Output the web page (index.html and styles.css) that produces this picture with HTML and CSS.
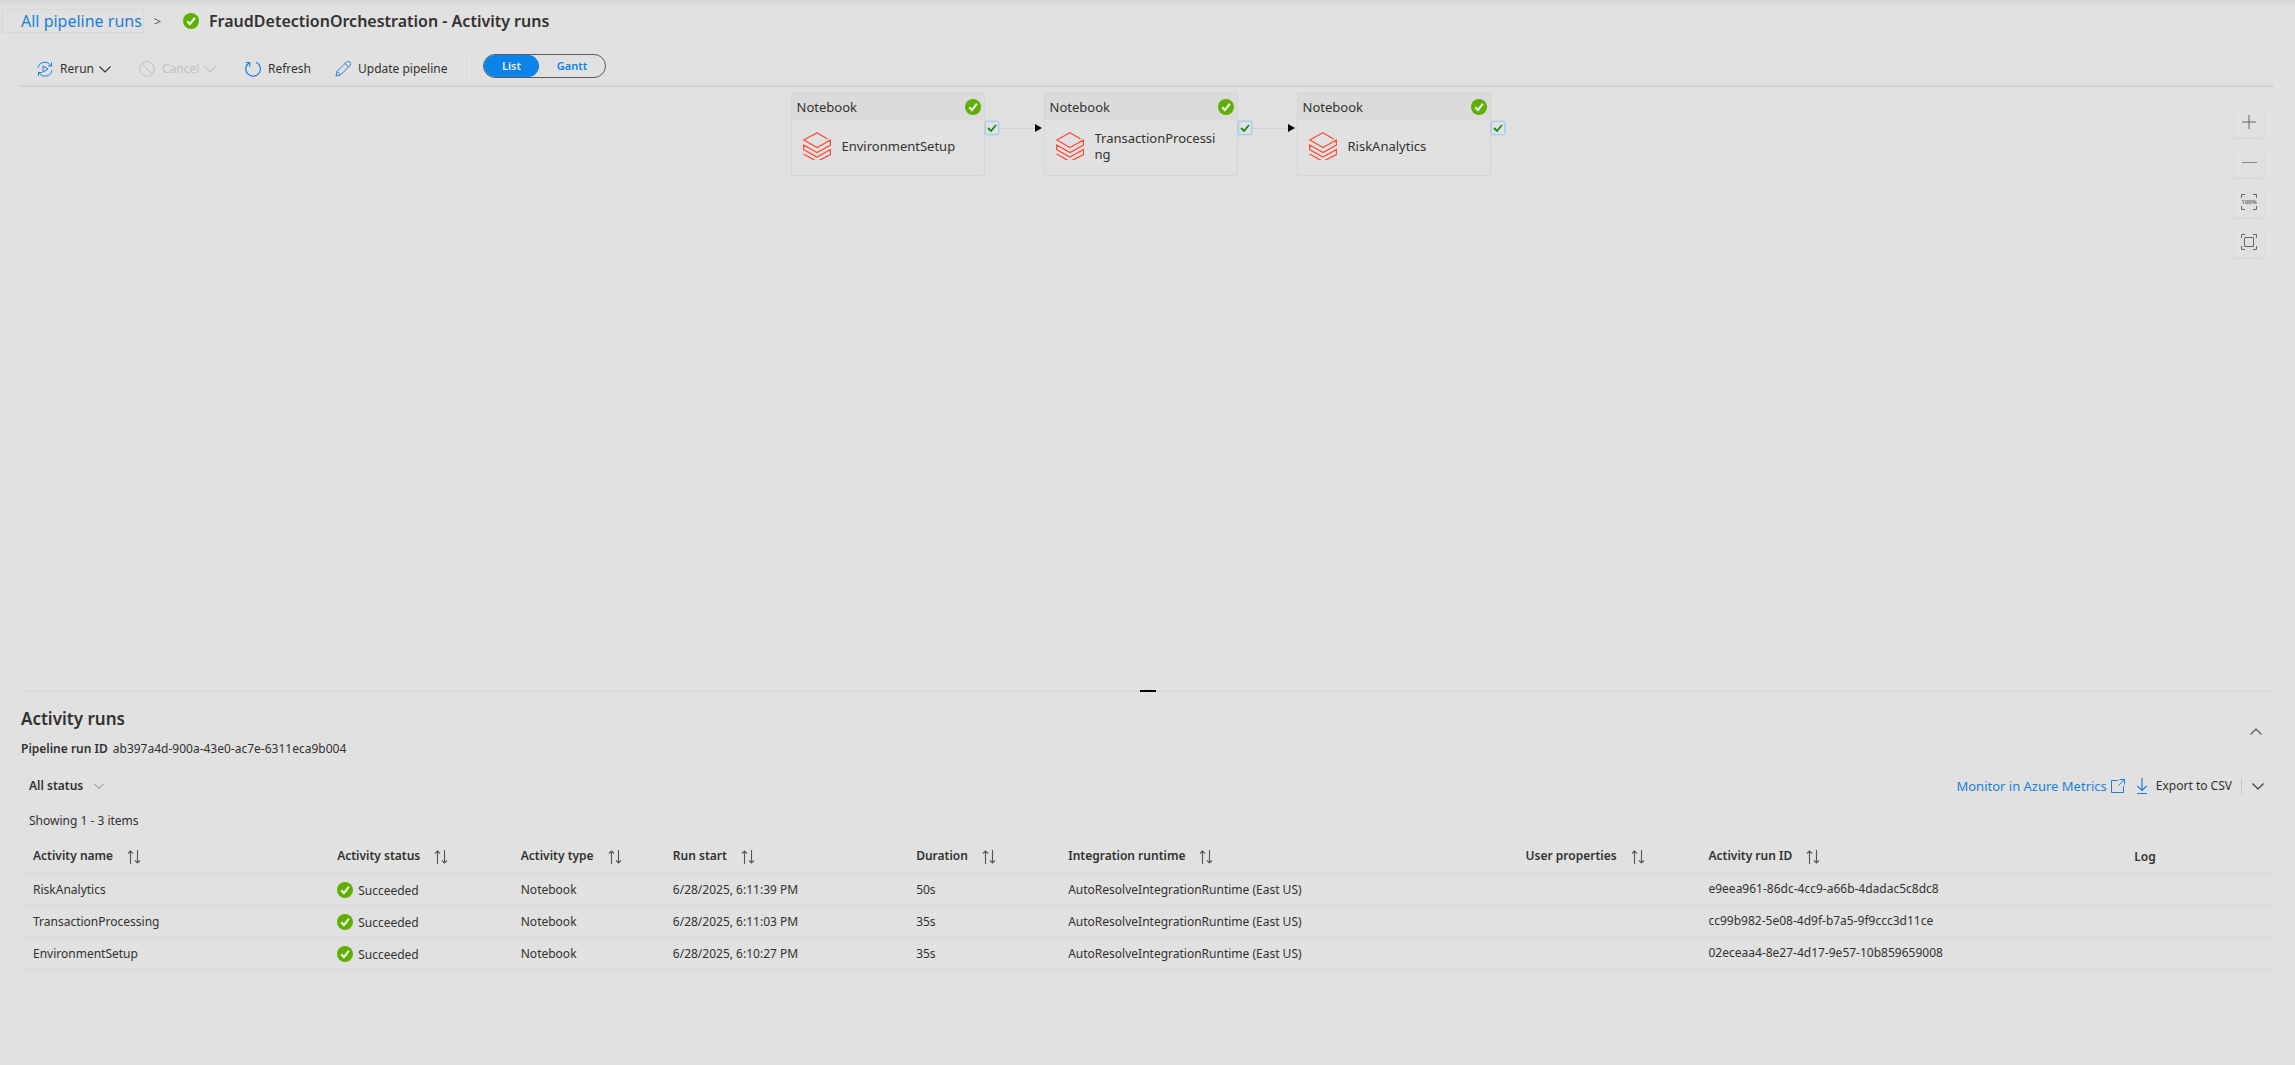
FILE: index.html
```html
<!DOCTYPE html>
<html lang="en">
<head>
<meta charset="utf-8">
<title>FraudDetectionOrchestration - Activity runs</title>
<link rel="stylesheet" href="styles.css">
</head>
<body>
<svg class="defs" aria-hidden="true">
  <symbol id="ok" viewBox="0 0 16 16"><circle cx="8" cy="8" r="8" fill="#5eb000"/><path d="M4.2 8.2l2.7 2.9 5-6.4" fill="none" stroke="#eee" stroke-width="2.2"/></symbol>
  <symbol id="chev" viewBox="0 0 12 12"><path d="M.5 3.500L6 9l5.500-5.500" fill="none" stroke="currentColor" stroke-width="1.100"/></symbol>
  <symbol id="sort" viewBox="0 0 14 16"><path d="M3.500 15V2M1 4.500L3.500 2 6 4.500M10.500 1v13M8 11.500l2.500 2.500 2.500-2.500" fill="none" stroke="#555" stroke-width="1.100"/></symbol>
  <symbol id="stack" viewBox="0 0 28 28"><path d="M24.500 7L14 .8.8 8 14 15.500 27.500 8v5L14 20.500.5 13v4.500L14 25l13.500-7.500v5L14 29.500.5 22M.5 13V12.500M27.500 17.500L14 25" fill="none" stroke="#ff4a36" stroke-width="1.300"/></symbol>
</svg>
<header class="top">
  <nav class="crumbs" aria-label="Breadcrumb">
    <a class="back" href="#runs">All pipeline runs</a>
    <span class="sep">&gt;</span>
  </nav>
  <svg class="ok"><use href="#ok"/></svg>
  <h1>FraudDetectionOrchestration - Activity runs</h1>
</header>
<div class="toolbar">
  <button class="cmd rerun"><svg class="ico" viewBox="0 0 16 16"><path d="M1 6.500A7 7 0 0 1 14 5M14.500 1.500V5H11M15 9.500A7 7 0 0 1 2 11.500M1.500 15v-3.500H5M6 4.800v6.400L11 8z" fill="none" stroke="currentColor"/></svg>Rerun<svg class="chev"><use href="#chev"/></svg></button>
  <button class="cmd cancel" disabled><svg class="ico" viewBox="0 0 16 16"><circle cx="8" cy="8" r="7.300" fill="none" stroke="currentColor"/><path d="M3 3l10 10" stroke="currentColor"/></svg>Cancel<svg class="chev"><use href="#chev"/></svg></button>
  <button class="cmd refresh"><svg class="ico" viewBox="0 0 16 16"><path d="M11 1.200A7.300 7.300 0 1 1 4.200 1.700M.8 1.500h3.900v4" fill="none" stroke="currentColor" stroke-width="1.200"/></svg>Refresh</button>
  <button class="cmd update"><svg class="ico" viewBox="0 0 16 16"><path d="M1 15l1-4.500L11.500 1a2 2 0 0 1 3.500 3.500L5.500 14zM2 10.500L5.500 14M10 2.500L13.500 6" fill="none" stroke="currentColor"/></svg>Update pipeline</button>
  <div class="view">
    <button class="seg on">List</button>
    <button class="seg">Gantt</button>
  </div>
</div>
<main>
  <section class="canvas" aria-label="Pipeline diagram">
    <div class="chain">
      <article class="node"><div class="node-head">Notebook<svg class="ok"><use href="#ok"/></svg></div><div class="node-body"><svg class="stack"><use href="#stack"/></svg><span class="node-name">EnvironmentSetup</span></div></article>
      <div class="link"><span class="port"><svg viewBox="0 0 10 10"><path d="M1 5l3 3 5-6" fill="none" stroke="#168a16" stroke-width="1.800"/></svg></span><span class="line"></span><span class="tip"></span></div>
      <article class="node"><div class="node-head">Notebook<svg class="ok"><use href="#ok"/></svg></div><div class="node-body"><svg class="stack"><use href="#stack"/></svg><span class="node-name">TransactionProcessing</span></div></article>
      <div class="link"><span class="port"><svg viewBox="0 0 10 10"><path d="M1 5l3 3 5-6" fill="none" stroke="#168a16" stroke-width="1.800"/></svg></span><span class="line"></span><span class="tip"></span></div>
      <article class="node"><div class="node-head">Notebook<svg class="ok"><use href="#ok"/></svg></div><div class="node-body"><svg class="stack"><use href="#stack"/></svg><span class="node-name">RiskAnalytics</span></div></article>
      <div class="link end"><span class="port"><svg viewBox="0 0 10 10"><path d="M1 5l3 3 5-6" fill="none" stroke="#168a16" stroke-width="1.800"/></svg></span></div>
    </div>
    <div class="zoom">
      <button aria-label="Zoom in"><svg viewBox="0 0 16 16"><path d="M1 8h14M8 1v14" stroke="#666"/></svg></button>
      <button aria-label="Zoom out"><svg viewBox="0 0 16 16"><path d="M1 8.500h15" stroke="#888"/></svg></button>
      <button class="full" aria-label="Zoom to 100%"><svg viewBox="0 0 16 16"><path d="M.5 4V.5H4M12 .5h3.500V4M.5 12v3.500H4M12 15.500h3.500V12" fill="none" stroke="#666"/></svg><span>100%</span></button>
      <button aria-label="Zoom to fit"><svg viewBox="0 0 16 16"><path d="M.5 4V.5H4M12 .5h3.500V4M.5 12v3.500H4M12 15.500h3.500V12M3.500 3.500h9v9h-9z" fill="none" stroke="#666"/></svg></button>
    </div>
  </section>
  <div class="splitter"><span></span></div>
  <section class="runs" id="runs">
    <div class="runs-head">
      <div>
        <h2>Activity runs</h2>
        <p class="run-id"><b>Pipeline run ID</b><span>ab397a4d-900a-43e0-ac7e-6311eca9b004</span></p>
      </div>
      <button class="fold" aria-label="Collapse"><svg class="chev flip"><use href="#chev"/></svg></button>
    </div>
    <div class="filters">
      <button class="status">All status<svg class="chev small"><use href="#chev"/></svg></button>
      <div class="actions">
        <a class="metrics" href="#metrics">Monitor in Azure Metrics<svg viewBox="0 0 14 14"><path d="M7 1.500H.5v12h12V7M8.500 .5h5v5M13.500 .5L7.500 6.500" fill="none" stroke="currentColor"/></svg></a>
        <button class="export"><svg viewBox="0 0 12 16"><path d="M6 0v12M1.500 8L6 12.500 10.500 8M1 15.500h10" fill="none" stroke="#1a7fdc" stroke-width="1.200"/></svg>Export to CSV</button>
        <button class="more" aria-label="More export options"><svg class="chev"><use href="#chev"/></svg></button>
      </div>
    </div>
    <p class="count">Showing 1 - 3 items</p>
    <table>
      <colgroup><col class="c-name"><col class="c-status"><col class="c-type"><col class="c-start"><col class="c-dur"><col class="c-rt"><col class="c-props"><col class="c-id"><col></colgroup>
      <thead><tr>
        <th>Activity name<svg class="sort"><use href="#sort"/></svg></th>
        <th>Activity status<svg class="sort"><use href="#sort"/></svg></th>
        <th>Activity type<svg class="sort"><use href="#sort"/></svg></th>
        <th>Run start<svg class="sort"><use href="#sort"/></svg></th>
        <th>Duration<svg class="sort"><use href="#sort"/></svg></th>
        <th>Integration runtime<svg class="sort"><use href="#sort"/></svg></th>
        <th>User properties<svg class="sort"><use href="#sort"/></svg></th>
        <th>Activity run ID<svg class="sort"><use href="#sort"/></svg></th>
        <th>Log</th>
      </tr></thead>
      <tbody>
        <tr><td>RiskAnalytics</td><td><svg class="ok"><use href="#ok"/></svg>Succeeded</td><td>Notebook</td><td>6/28/2025, 6:11:39 PM</td><td>50s</td><td>AutoResolveIntegrationRuntime (East US)</td><td></td><td class="guid">e9eea961-86dc-4cc9-a66b-4dadac5c8dc8</td><td></td></tr>
        <tr><td>TransactionProcessing</td><td><svg class="ok"><use href="#ok"/></svg>Succeeded</td><td>Notebook</td><td>6/28/2025, 6:11:03 PM</td><td>35s</td><td>AutoResolveIntegrationRuntime (East US)</td><td></td><td class="guid">cc99b982-5e08-4d9f-b7a5-9f9ccc3d11ce</td><td></td></tr>
        <tr><td>EnvironmentSetup</td><td><svg class="ok"><use href="#ok"/></svg>Succeeded</td><td>Notebook</td><td>6/28/2025, 6:10:27 PM</td><td>35s</td><td>AutoResolveIntegrationRuntime (East US)</td><td></td><td class="guid">02eceaa4-8e27-4d17-9e57-10b859659008</td><td></td></tr>
      </tbody>
    </table>
  </section>
</main>
</body>
</html>
```
FILE: styles.css
```css
* { box-sizing: border-box; }
body {
  margin: 0;
  min-height: 100vh;
  padding: 0 21px;
  background: #e1e1e1 linear-gradient(#d6d6d6, #e1e1e1) 0 0 / 100% 8px no-repeat;
  color: #323130;
  font: 12px/16px "Noto Sans", "Open Sans", sans-serif;
}
h1, h2, p { margin: 0; }
button { border: 0; padding: 0; background: none; color: inherit; font: inherit; }
a { color: #1a7fdc; text-decoration: none; }
svg { display: block; flex: none; }
.defs { position: absolute; width: 0; height: 0; }
.ok { width: 16px; height: 16px; }
.chev { width: 12px; height: 12px; }

.top { display: flex; align-items: center; height: 41px; }
.crumbs { display: flex; align-items: center; gap: 10px; width: 162px; font-size: 16px; }
.back { margin-left: -19px; padding: 3px 1px 3px 18px; border: 1px solid #d8d8d8; white-space: nowrap; }
.sep { font-size: 13px; color: #555; }
h1 { margin-left: 10px; font-size: 16px; line-height: 20px; font-weight: 600; }

.toolbar {
  display: flex;
  align-items: center;
  height: 46px;
  padding: 8px 0 0 16px;
  border-bottom: 2px solid #d3d3d3;
}
.cmd { display: flex; align-items: center; gap: 7px; height: 30px; padding-top: 3px; }
.ico { width: 16px; height: 16px; color: #1a7fdc; }
.cmd .chev { margin-left: -2px; }
.rerun { width: 102px; }
.cancel, .cancel .ico { color: #c2c2c2; }
.cancel { width: 106px; }
.refresh { width: 90px; }
.update { width: 132px; border-right: 1px solid #dadada; }
.view {
  display: flex;
  height: 24px;
  width: 123px;
  margin: 0 0 2px 16px;
  border: 1px solid #5a5a5a;
  border-radius: 12px;
}
.seg { flex: 1; color: #0a84e8; font-size: 11px; font-weight: 600; }
.seg.on { flex: none; width: 55px; background: #0a84e8; color: #eee; border-radius: 11px; }

.canvas { position: relative; height: 603px; padding-top: 5px; }
.chain { display: flex; justify-content: center; align-items: flex-start; }
.node { width: 194px; height: 84px; border: 1px solid #d6d6d6; border-radius: 2px; }
.node-head {
  display: flex;
  align-items: center;
  justify-content: space-between;
  height: 27px;
  padding: 0 3px 0 5px;
  background: #dbdbdb;
  font-size: 13px;
}
.node-body { display: flex; align-items: center; gap: 11px; height: 52px; padding-left: 11px; font-size: 13px; }
.stack { width: 28px; height: 28px; }
.node-name { width: 124px; max-height: 32px; overflow: hidden; overflow-wrap: anywhere; }
.link { display: flex; align-items: center; width: 59px; height: 14px; margin-top: 29px; }
.link.end { width: 14px; }
.port {
  width: 14px;
  height: 14px;
  padding: 1px;
  border: 1px solid #a5cdf0;
  border-radius: 2px;
  box-shadow: 0 0 2px #8cc4f5;
}
.line { flex: 1; height: 1px; background: #d4d4d4; }
.tip { margin-right: 2px; border: 4px solid transparent; border-left: 7px solid #000; border-right: 0; }

.zoom { position: absolute; top: 20px; right: 10px; display: grid; gap: 10px; }
.zoom button { display: grid; place-items: center; width: 30px; height: 30px; box-shadow: 0 2px 3px #d6d6d6; background: #e1e1e1; }
.zoom svg { width: 16px; height: 16px; }
.zoom svg, .zoom span { grid-area: 1 / 1; }
.zoom span { font-size: 6px; line-height: 8px; font-weight: 600; color: #666; }

.splitter { display: flex; justify-content: center; height: 2px; background: #dbdbdb; }
.splitter span { width: 16px; background: #000; }

.runs-head { display: flex; justify-content: space-between; padding-top: 15px; }
h2 { font-size: 17px; line-height: 24px; font-weight: 600; }
.run-id { display: flex; gap: 5px; margin-top: 10px; }
.run-id b { font-weight: 600; }
.fold { margin: 19px 12px 0 0; height: 12px; color: #555; }
.flip { transform: scaleY(-1); }
.filters { display: flex; justify-content: space-between; align-items: center; margin-top: 19px; height: 20px; padding: 0 8px; }
.status { display: flex; align-items: center; gap: 11px; font-weight: 600; }
.small { width: 10px; height: 10px; color: #777; }
.actions { display: flex; align-items: center; }
.metrics { display: flex; align-items: center; gap: 4px; font-size: 13px; }
.metrics svg { width: 14px; height: 14px; }
.export { display: flex; align-items: center; gap: 8px; margin-left: 11px; padding-right: 9px; border-right: 1px solid #c8c8c8; }
.export svg { width: 12px; height: 16px; }
.more { margin: 0 2px 0 10px; }
.count { margin: 17px 0 0 8px; }

table { width: 100%; margin-top: 12px; border-collapse: collapse; table-layout: fixed; }
th, td { height: 32px; padding: 2px 0 0 12px; border-bottom: 1px solid #d8d8d8; text-align: left; white-space: nowrap; }
th { font-weight: 600; padding-top: 0; }
.guid { padding-top: 0; }
.sort { display: inline-block; width: 14px; height: 16px; margin-left: 14px; vertical-align: -5px; }
td .ok { display: inline-block; margin: 0 5px 0 0; vertical-align: -3px; }
.c-name { width: 13.5%; }
.c-status { width: 8.15%; }
.c-type { width: 6.75%; }
.c-start { width: 10.8%; }
.c-dur { width: 6.75%; }
.c-rt { width: 20.3%; }
.c-props { width: 8.12%; }
.c-id { width: 18.9%; }
```
